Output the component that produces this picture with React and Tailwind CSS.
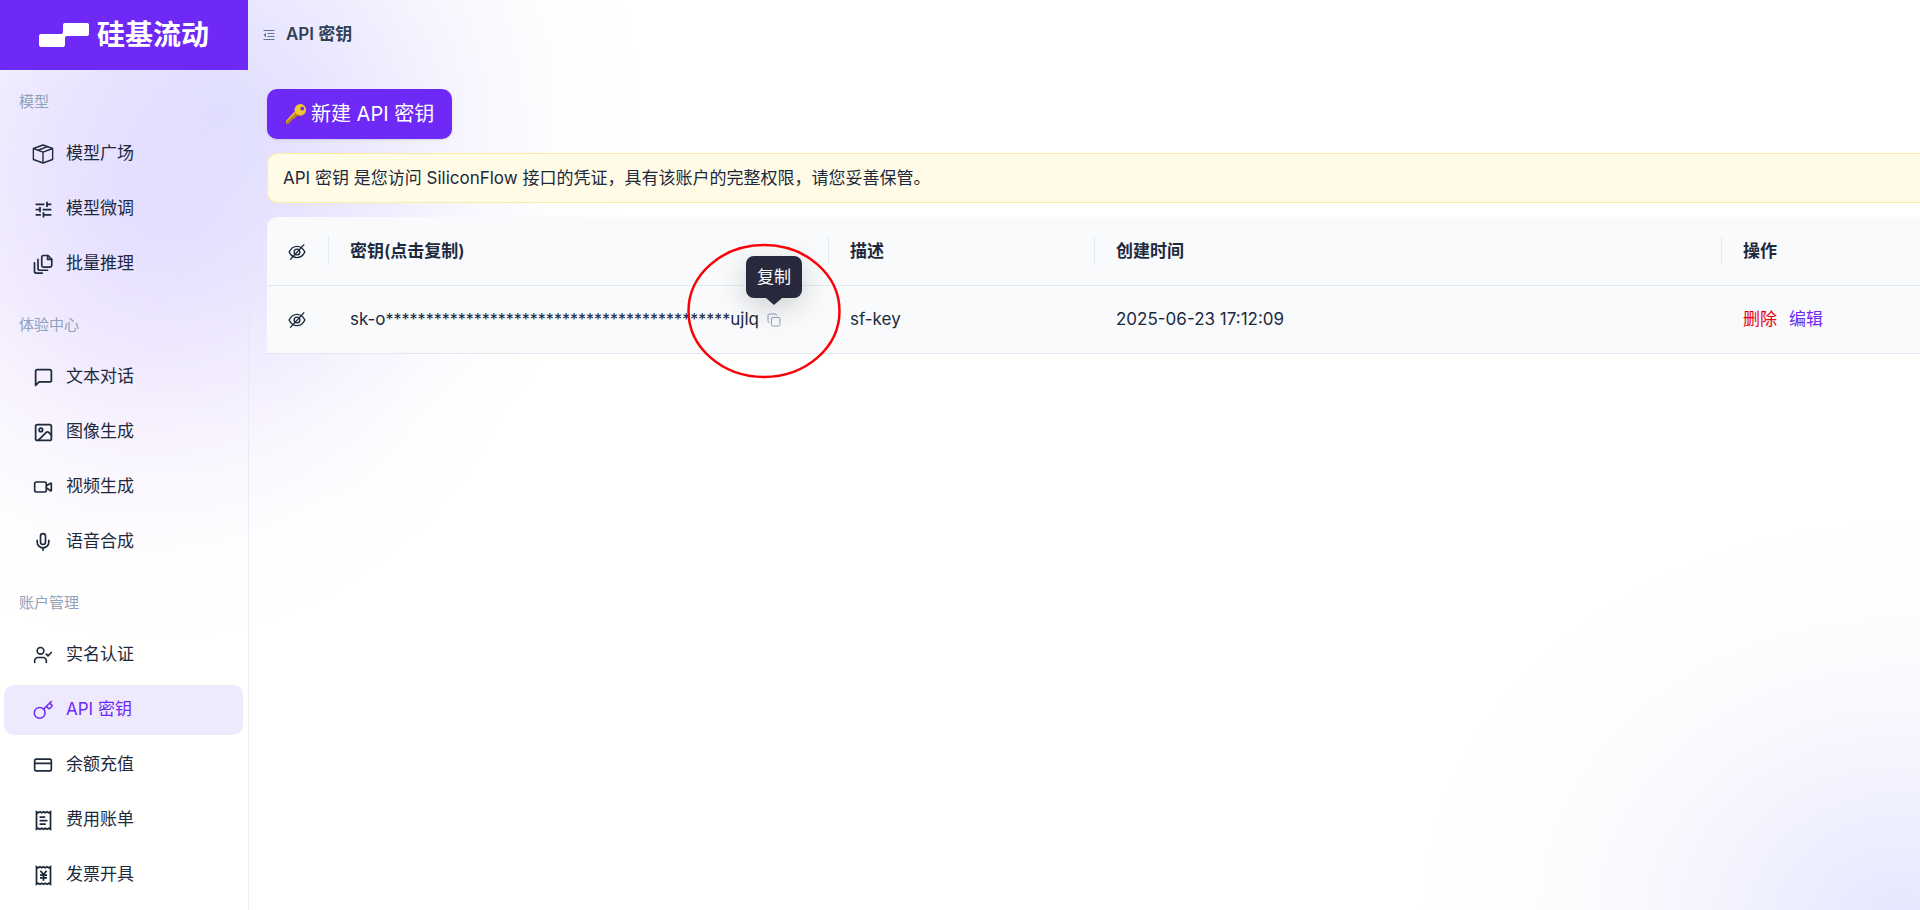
import { useState } from 'react';
import { Image, Video, Mic, UserCheck, CreditCard } from 'lucide-react';
import { FiMessageSquare } from 'react-icons/fi';
import { MdTune } from 'react-icons/md';

function BoxIcon() {
  return (
    <svg className="size-[22px]" viewBox="0 0 24 24" fill="none" stroke="currentColor" strokeWidth="1.500" strokeLinejoin="round">
      <path d="M1.500 6 12 2.200 22.500 6v12L12 21.800 1.500 18z" />
      <path d="M1.500 6 12 10l10.500-4M12 10v11.800M6.500 7.900 17 4" />
    </svg>
  );
}

function BatchIcon() {
  return (
    <svg className="size-5" viewBox="0 0 24 24" fill="none" stroke="currentColor" strokeWidth="2" strokeLinecap="round" strokeLinejoin="round">
      <path d="M12.500 1.800H18l4.500 4.500v7.500a2 2 0 0 1-2 2h-8a2 2 0 0 1-2-2v-10a2 2 0 0 1 2-2z" />
      <path d="M17.500 2v4.500h4.800" />
      <path d="M6 6.500v11a2 2 0 0 0 2 2h9.500" />
      <path d="M1.800 10.500v10.500a2 2 0 0 0 2 2H11" />
    </svg>
  );
}

function KeyIcon() {
  return (
    <svg className="size-5" viewBox="0 0 24 24" fill="none" stroke="currentColor" strokeWidth="1.800" strokeLinecap="round" strokeLinejoin="round">
      <circle cx="8" cy="15.500" r="6.500" />
      <path d="M12.500 11 22 1.800M16 7.500l2.300 2.300a1.500 1.500 0 0 0 2.100 0l1.900-1.900a1.500 1.500 0 0 0 0-2.100L20 3.700" />
    </svg>
  );
}

function ReceiptIcon({ children }) {
  return (
    <svg className="size-[21px]" viewBox="0 0 24 24" fill="none" stroke="currentColor" strokeWidth="2">
      <path d="M4 2v20l2-1.200L8 22l2-1.200 2 1.200 2-1.200 2 1.200 2-1.200 2 1.200V2l-2 1.200L16 2l-2 1.200L12 2l-2 1.200L8 2 6 3.200z" />
      {children}
    </svg>
  );
}

function BillIcon() {
  return (
    <ReceiptIcon>
      <path d="M7.500 8h6.500M7.500 12h9M7.500 16h7" />
    </ReceiptIcon>
  );
}

function InvoiceIcon() {
  return (
    <ReceiptIcon>
      <path d="m8.500 6.500 3.500 4.500 3.500-4.500M12 11v7M8 11.500h8M8 14.700h8" />
    </ReceiptIcon>
  );
}

function EyeOffIcon() {
  return (
    <svg className="size-[18px]" viewBox="0 0 24 24" fill="none" stroke="currentColor" strokeWidth="1.900" strokeLinecap="round">
      <path d="M1.500 12C4 7 7.700 4.500 12 4.500S20 7 22.500 12C20 17 16.300 19.500 12 19.500S4 17 1.500 12z" />
      <circle cx="12" cy="12" r="3.800" />
      <path d="M21 2.500 3.500 21.500" />
    </svg>
  );
}

function CopyIcon() {
  return (
    <svg className="size-[14px]" viewBox="0 0 14 14" fill="none" stroke="currentColor" strokeWidth="1">
      <rect x="4.500" y="4.500" width="8.500" height="8.500" rx="1.500" />
      <path d="M2.500 9.500A1.500 1.500 0 0 1 1 8V2.500A1.500 1.500 0 0 1 2.500 1H8a1.500 1.500 0 0 1 1.500 1.500" />
    </svg>
  );
}

function GoldKey() {
  return (
    <svg className="size-[22px]" viewBox="0 0 22 22" aria-hidden="true">
      <path fill="#b8841c" d="M9.500 9.500 1 18.500V21l3.200-.3.500-2.200 2-.3.300-2 2-.3 3.800-3.700z" />
      <path fill="#e9b92b" d="M9.300 8.800 1 17.800v1.500L11.800 9.500z" />
      <path fill="#f1c72f" fillRule="evenodd" d="M15.300 1a5.800 5.800 0 1 0 0 11.600 5.800 5.800 0 0 0 0-11.600zm2 2.700a1.900 1.900 0 1 1 0 3.800 1.900 1.900 0 0 1 0-3.800z" />
      <path fill="none" stroke="#c8921f" strokeWidth="1" d="M10 9.500c1.600 2.800 5 3.500 7.500 2.300" />
    </svg>
  );
}

function CollapseIcon() {
  return (
    <svg className="size-3" viewBox="0 0 12 12" fill="none" stroke="currentColor" strokeWidth="1">
      <path d="M.5 1.500h11M4.500 4.500h7M4.500 7.500h7M.5 10.500h11" />
      <path fill="currentColor" stroke="none" d="M3 3.800v4.400L.5 6z" />
    </svg>
  );
}

const groups = [
  {
    title: '模型',
    items: [
      { label: '模型广场', icon: <BoxIcon /> },
      { label: '模型微调', icon: <MdTune className="size-[21px]" /> },
      { label: '批量推理', icon: <BatchIcon /> },
    ],
  },
  {
    title: '体验中心',
    items: [
      { label: '文本对话', icon: <FiMessageSquare className="size-[21px]" /> },
      { label: '图像生成', icon: <Image className="size-[21px]" /> },
      { label: '视频生成', icon: <Video className="size-5" /> },
      { label: '语音合成', icon: <Mic className="size-5" /> },
    ],
  },
  {
    title: '账户管理',
    items: [
      { label: '实名认证', icon: <UserCheck className="size-5" /> },
      { label: 'API 密钥', icon: <KeyIcon /> },
      { label: '余额充值', icon: <CreditCard className="size-5" /> },
      { label: '费用账单', icon: <BillIcon /> },
      { label: '发票开具', icon: <InvoiceIcon /> },
    ],
  },
];

const keys = [
  { id: 1, prefix: 'sk-o', suffix: 'ujlq', hidden: 43, desc: 'sf-key', created: '2025-06-23 17:12:09' },
];

function Sidebar({ active, onSelect }) {
  return (
    <aside className="w-[249px] shrink-0 border-r border-slate-200/70">
      <div className="flex h-[70px] items-center justify-center gap-2 bg-[#6e29f6] text-white">
        <svg className="h-6 w-[50px]" viewBox="0 0 50 24" fill="currentColor">
          <path d="M26 0h22a2 2 0 0 1 2 2v9a2 2 0 0 1-2 2H28a2 2 0 0 0-2 2v7a2 2 0 0 1-2 2H2a2 2 0 0 1-2-2v-9a2 2 0 0 1 2-2h20a2 2 0 0 0 2-2V2a2 2 0 0 1 2-2z" />
        </svg>
        <span className="text-[28px] leading-8 font-bold">硅基流动</span>
      </div>
      <nav className="flex flex-col gap-[25px] pt-[21px]">
        {groups.map((group) => (
          <section key={group.title}>
            <h2 className="mb-4 pl-[19px] text-[15px] leading-[22px] text-slate-400">{group.title}</h2>
            <ul className="flex flex-col gap-[5px] pr-[5px] pl-1">
              {group.items.map((item) => (
                <li key={item.label}>
                  <a
                    href="#"
                    onClick={() => onSelect(item.label)}
                    className={`flex h-[50px] items-center gap-3 rounded-[10px] pl-7 text-[17px] ${
                      active === item.label ? 'bg-[#efe9fe] text-[#6e29f6]' : 'text-slate-800'
                    }`}
                  >
                    <span className="flex w-[22px] justify-center">{item.icon}</span>
                    {item.label}
                  </a>
                </li>
              ))}
            </ul>
          </section>
        ))}
      </nav>
    </aside>
  );
}

function HeadCell({ children, last }) {
  return (
    <th className="relative pt-0.5 pl-[21px] text-left font-semibold">
      {children}
      {!last && <span className="absolute top-5 right-0 h-7 w-px bg-slate-200" />}
    </th>
  );
}

function CopyButton() {
  return (
    <span className="relative ml-2 inline-flex">
      <button type="button" aria-label="复制" className="text-slate-400">
        <CopyIcon />
      </button>
      <span role="tooltip" className="absolute bottom-[29px] left-1/2 -translate-x-1/2">
        <span className="block rounded-lg bg-[#28293d] px-[11px] py-2 text-[17px] leading-[26px] whitespace-nowrap text-white shadow-[0_8px_30px_rgba(0,0,0,0.18)]">
          复制
        </span>
        <span className="absolute top-full left-1/2 -translate-x-1/2 border-x-8 border-t-[7px] border-x-transparent border-t-[#28293d]" />
      </span>
      <svg className="pointer-events-none absolute -top-[70px] -left-[80px] h-[136px] w-[154px] max-w-none" viewBox="0 0 154 136" fill="none">
        <ellipse cx="77" cy="68" rx="75.500" ry="66" stroke="#fb0007" strokeWidth="2.500" />
      </svg>
    </span>
  );
}

export default function App() {
  const [active, setActive] = useState('API 密钥');

  return (
    <div className="flex h-screen overflow-hidden bg-[#fffffe] bg-[radial-gradient(ellipse_420px_400px_at_220px_110px,rgba(216,216,255,0.7),rgba(218,218,255,0.48)_30%,rgba(224,226,255,0.24)_60%,rgba(236,236,255,0.08)_82%,transparent),radial-gradient(ellipse_400px_420px_at_150px_220px,rgba(230,212,255,0.7),rgba(232,214,255,0.5)_30%,rgba(236,222,255,0.24)_60%,rgba(240,232,255,0.08)_82%,transparent),radial-gradient(ellipse_480px_400px_at_1900px_920px,rgba(222,224,255,0.8),rgba(226,228,255,0.5)_30%,rgba(236,234,255,0.24)_60%,rgba(244,242,255,0.08)_82%,transparent)] font-[Inter,'Noto_Sans_CJK_SC',sans-serif] text-slate-800">
      <Sidebar active={active} onSelect={setActive} />
      <main className="min-w-0 flex-1">
        <header className="flex h-[70px] items-center gap-[11px] pl-[14px]">
          <button type="button" aria-label="收起菜单" className="text-slate-500">
            <CollapseIcon />
          </button>
          <h1 className="text-[17px] font-semibold text-slate-700">API 密钥</h1>
        </header>
        <div className="flex flex-col items-start gap-[14px] pt-[19px] pl-[18px]">
          <button
            type="button"
            className="flex h-[50px] items-center gap-1 rounded-[10px] bg-[#6e29f6] px-[18px] text-[20px] text-white shadow-sm"
          >
            <GoldKey />
            新建 API 密钥
          </button>
          <p className="w-full rounded-l-[10px] border border-r-0 border-[#ffe9a3] bg-[#fffbe6] px-[15px] py-3 text-[17px] leading-6">
            API 密钥 是您访问 SiliconFlow 接口的凭证，具有该账户的完整权限，请您妥善保管。
          </p>
          <div className="w-full rounded-tl-[10px] bg-[#f8fafc]">
            <table className="w-full table-fixed text-[17px]">
              <colgroup>
                <col className="w-[62px]" />
                <col className="w-[500px]" />
                <col className="w-[266px]" />
                <col />
                <col className="w-[198px]" />
              </colgroup>
              <thead>
                <tr className="h-[68px] border-b border-slate-200">
                  <HeadCell>
                    <EyeOffIcon />
                  </HeadCell>
                  <HeadCell>密钥(点击复制)</HeadCell>
                  <HeadCell>描述</HeadCell>
                  <HeadCell>创建时间</HeadCell>
                  <HeadCell last>操作</HeadCell>
                </tr>
              </thead>
              <tbody>
                {keys.map((key) => (
                  <tr key={key.id} className="h-[68px] border-b border-slate-200 *:pt-0.5 *:pl-[21px]">
                    <td>
                      <button type="button" aria-label="显示密钥" className="block">
                        <EyeOffIcon />
                      </button>
                    </td>
                    <td>
                      <div className="flex items-center whitespace-nowrap">
                        <span>
                          {key.prefix}
                          <span className="text-base">{'*'.repeat(key.hidden)}</span>
                          {key.suffix}
                        </span>
                        <CopyButton />
                      </div>
                    </td>
                    <td>{key.desc}</td>
                    <td>{key.created}</td>
                    <td>
                      <div className="flex gap-3">
                        <button type="button" className="text-red-600">删除</button>
                        <button type="button" className="text-[#6e29f6]">编辑</button>
                      </div>
                    </td>
                  </tr>
                ))}
              </tbody>
            </table>
          </div>
        </div>
      </main>
    </div>
  );
}
